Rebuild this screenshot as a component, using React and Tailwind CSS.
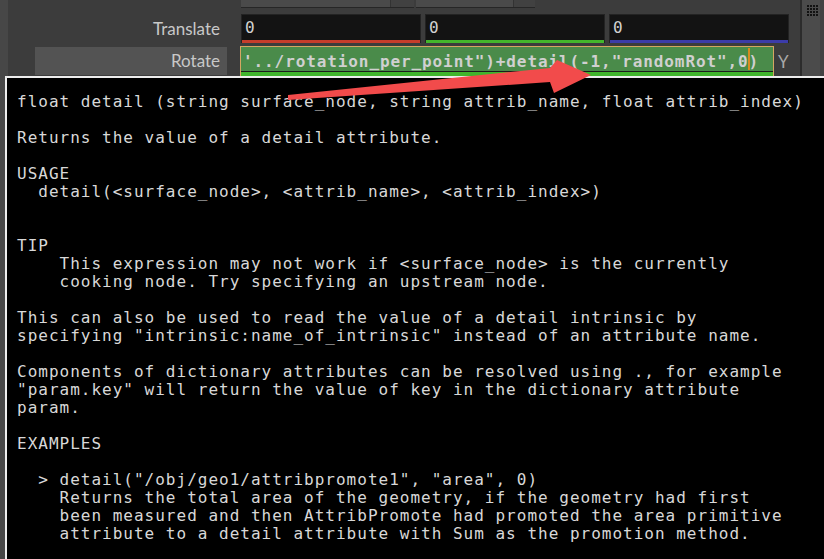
import React from "react";

const helpText = `float detail (string surface_node, string attrib_name, float attrib_index)

Returns the value of a detail attribute.

USAGE
  detail(<surface_node>, <attrib_name>, <attrib_index>)


TIP
    This expression may not work if <surface_node> is the currently
    cooking node. Try specifying an upstream node.

This can also be used to read the value of a detail intrinsic by
specifying "intrinsic:name_of_intrinsic" instead of an attribute name.

Components of dictionary attributes can be resolved using ., for example
"param.key" will return the value of key in the dictionary attribute
param.

EXAMPLES

  > detail("/obj/geo1/attribpromote1", "area", 0)
    Returns the total area of the geometry, if the geometry had first
    been measured and then AttribPromote had promoted the area primitive
    attribute to a detail attribute with Sum as the promotion method.`;

function VecField({ bar }) {
  return (
    <div className="w-[180px] h-[29px] flex flex-col border border-[#232323] border-b-0 bg-[#131313]">
      <div className="flex-1 flex items-center pl-[3px] text-[16px] text-[#d2d2d2] font-['DejaVu_Sans_Mono',monospace]">
        0
      </div>
      <div className={`h-[3px] ${bar}`} />
    </div>
  );
}

export default function App() {
  const dots = Array.from({ length: 16 });
  return (
    <div className="relative w-[824px] h-[559px] overflow-hidden bg-[#3c3c3c] font-['Lato',sans-serif]">
      <div className="flex h-full">
        <div className="w-[8px] h-full bg-[#474747]" />
        <div className="flex-1 flex flex-col">
          {/* top buttons */}
          <div className="h-[8px] flex pl-[233px] gap-[2px]">
            <div className="w-[173px] h-[8px] flex border-b border-[#262626]">
              <div className="w-[149px] bg-[#4a4a4a]" />
              <div className="flex-1 bg-[#414141] border-l border-[#333]" />
            </div>
            <div className="w-[119px] h-[8px] flex border-b border-[#262626]">
              <div className="w-[97px] bg-[#4a4a4a]" />
              <div className="flex-1 bg-[#414141] border-l border-[#333]" />
            </div>
          </div>
          {/* Translate */}
          <div className="mt-[6px] h-[29px] flex items-center">
            <div className="w-[219px] pr-[7px] text-right text-[17px] text-[#c8c8c8]">Translate</div>
            <div className="ml-[14px] flex gap-[4px]">
              <VecField bar="bg-[#c63c2b]" />
              <VecField bar="bg-[#43b62c]" />
              <VecField bar="bg-[#3c3ca9]" />
            </div>
          </div>
          {/* Rotate */}
          <div className="mt-[3px] h-[30px] flex">
            <div className="ml-[27px] w-[192px] mt-[1px] h-[28px] bg-[#535353] flex items-center justify-end pr-[7px] text-[17px] text-[#c8c8c8]">
              Rotate
            </div>
            <div className="ml-[13px] w-[534px] h-[30px] flex flex-col border border-b-0 border-[#d6a662] bg-[#4a8b4a]">
              <div className="h-[24px] pl-[2px] pt-[6px] whitespace-pre text-[16px] leading-[18px] tracking-[0.9px] font-bold text-[#d0d0d0] font-['DejaVu_Sans_Mono',monospace]">
                {`'../rotation_per_point")+detail(-1,"randomRot",`}
                <span className="relative">
                  0
                  <span className="absolute right-[-1px] top-[-4px] w-[2px] h-[22px] bg-[#d98a1f]" />
                </span>
                {")"}
              </div>
              <div className="h-[1px] bg-[#1c1c1c]" />
              <div className="h-[5px] bg-[#40b52c]" />
            </div>
            <div className="ml-[4px] mt-[3px] text-[17px] text-[#a8a8a8]">Y</div>
          </div>
        </div>
        <div className="w-[2px] h-full bg-[#2c2c2c]" />
        <div className="w-[18px] h-full bg-[#4b4b4b] pt-[5px] pl-[5px]">
          <div className="grid grid-cols-4 gap-[1px] w-[11px]">
            {dots.map((_, i) => (
              <div key={i} className="w-[2px] h-[2px] bg-[#121212]" />
            ))}
          </div>
        </div>
        <div className="w-[4px] h-full bg-[#434343]" />
      </div>

      {/* help popup */}
      <div className="absolute left-[5px] top-[76px] w-[830px] h-[500px] bg-black border-2 border-[#ededed]">
        <pre className="pl-[10px] pt-[15px] m-0 whitespace-pre text-[16px] leading-[18px] tracking-[1px] text-[#d8d8d8] font-['DejaVu_Sans_Mono',monospace]">
          {helpText}
        </pre>
      </div>

      {/* annotation arrow */}
      <svg className="absolute left-0 top-0 pointer-events-none" width="824" height="559" viewBox="0 0 824 559">
        <polygon
          points="288,95 288,100 550,82 554,93 591,75 557,60 550,68"
          fill="#f24b4b"
        />
      </svg>
    </div>
  );
}
